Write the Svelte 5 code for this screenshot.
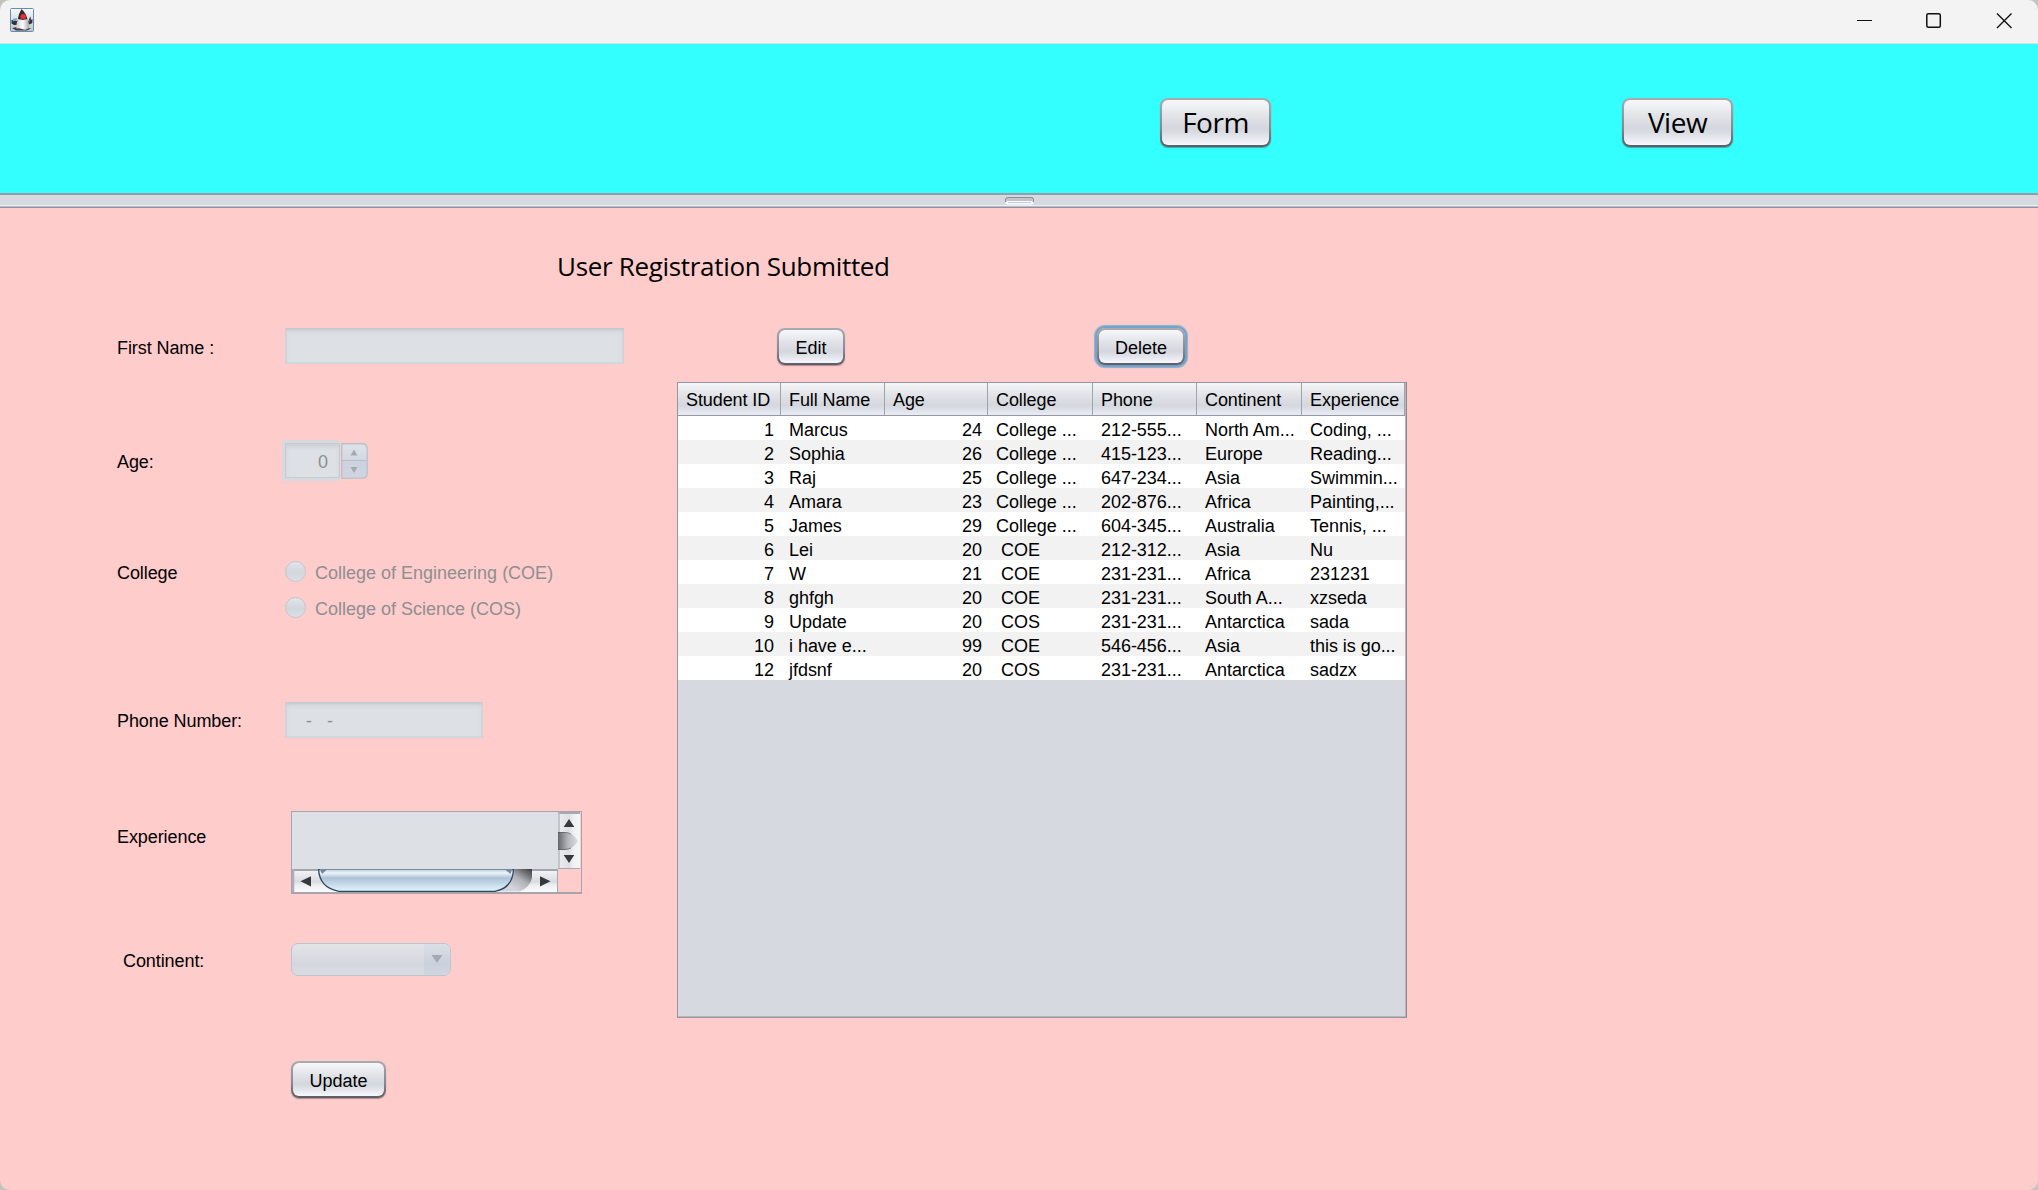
<script>
  const columns = ['Student ID', 'Full Name', 'Age', 'College', 'Phone', 'Continent', 'Experience'];
  const rows = [
    ['1', 'Marcus', '24', 'College ...', '212-555...', 'North Am...', 'Coding, ...'],
    ['2', 'Sophia', '26', 'College ...', '415-123...', 'Europe', 'Reading...'],
    ['3', 'Raj', '25', 'College ...', '647-234...', 'Asia', 'Swimmin...'],
    ['4', 'Amara', '23', 'College ...', '202-876...', 'Africa', 'Painting,...'],
    ['5', 'James', '29', 'College ...', '604-345...', 'Australia', 'Tennis, ...'],
    ['6', 'Lei', '20', ' COE', '212-312...', 'Asia', 'Nu'],
    ['7', 'W', '21', ' COE', '231-231...', 'Africa', '231231'],
    ['8', 'ghfgh', '20', ' COE', '231-231...', 'South A...', 'xzseda'],
    ['9', 'Update', '20', ' COS', '231-231...', 'Antarctica', 'sada'],
    ['10', 'i have e...', '99', ' COE', '546-456...', 'Asia', 'this is go...'],
    ['12', 'jfdsnf', '20', ' COS', '231-231...', 'Antarctica', 'sadzx']
  ];
</script>

<div class="window">
  <div class="titlebar">
    <svg class="duke" width="24" height="24" viewBox="0 0 24 24">
      <defs>
        <linearGradient id="tile" x1="0" y1="0" x2="0" y2="1">
          <stop offset="0" stop-color="#f6f8fd" /><stop offset="1" stop-color="#bfc4d2" />
        </linearGradient>
        <linearGradient id="belly" x1="0" y1="0" x2="1" y2="0">
          <stop offset="0" stop-color="#c8c8c8" /><stop offset=".5" stop-color="#fff" /><stop offset="1" stop-color="#aaa" />
        </linearGradient>
      </defs>
      <rect x=".5" y=".5" width="23" height="23" rx="1" fill="url(#tile)" stroke="#6d8ba6" />
      <path d="M2 20Q10 18 21 20.500L17 22.500H6Z" fill="#3d4146" />
      <path d="M1.500 12L7 13L9 10L9.500 13L8 17L4 17L1.500 15.500Z" fill="#2e3338" />
      <path d="M3 11L7 10L6.500 12.500L3 13.500Z" fill="#6fa5cc" />
      <path d="M16 10L19.500 14L19 11L20.500 8.500L21 12L22.500 11L22.300 15L19.500 16.500L16 14Z" fill="#2e3338" />
      <path d="M8.500 10Q5.500 17 6.500 20.500Q9 20 12 21Q16 22.500 18.500 20.500Q20 15 16.500 10Z" fill="url(#belly)" />
      <path d="M11.500 1Q8.500 6 7.800 11L13 12L17.300 11Q16 5 11.500 1Z" fill="#2d2d30" />
      <ellipse cx="13.200" cy="8.600" rx="2.800" ry="2.600" fill="#f02a2c" />
    </svg>
    <svg class="controls" width="150" height="18" viewBox="0 0 150 18" fill="none" stroke="#101010">
      <path d="M1 8.500H16" />
      <rect x="70.800" y="1.800" width="13.500" height="13.500" rx="1.500" stroke-width="1.500" />
      <path d="M141 1.500L155.500 16M155.500 1.500L141 16" stroke-width="1.400" />
    </svg>
  </div>

  <nav class="toolbar">
    <button class="btn large">Form</button>
    <button class="btn large">View</button>
  </nav>

  <div class="splitter">
    <svg width="29" height="8" viewBox="0 0 29 8">
      <rect x=".5" y=".5" width="28" height="7" rx="2" fill="#fafbff" />
      <path d="M.700 5V2.500Q1 .700 3 .700H26Q28 .700 28.300 2.500V5" fill="none" stroke="#8b8f9b" stroke-width="1.400" />
      <rect x="2" y="2" width="25" height="2" fill="#bfc2cb" />
      <rect x="3" y="5" width="23" height="1" fill="#c6c9d1" />
    </svg>
  </div>

  <main>
    <h1><span>User Registration Submitted</span></h1>
    <div class="content">
      <section class="form">
        <div class="row name">
          <span class="label">First Name :</span>
          <div class="field"></div>
        </div>
        <div class="row age">
          <span class="label">Age:</span>
          <div class="spinner">
            <div class="number">0</div>
            <svg width="27" height="36" viewBox="0 0 27 36">
              <defs>
                <linearGradient id="spin" x1="0" y1="0" x2="0" y2="1">
                  <stop offset="0" stop-color="#dfe3e9" /><stop offset=".45" stop-color="#d3d9e1" />
                  <stop offset=".5" stop-color="#ccd3df" /><stop offset="1" stop-color="#cfd6e1" />
                </linearGradient>
              </defs>
              <path d="M.750 .750H21Q26.200 .750 26.200 6V30Q26.200 35.200 21 35.200H.750Z" fill="url(#spin)" stroke="#b7c1cd" stroke-width="1.300" />
              <path d="M1 17.500H26" stroke="#b9c1cc" />
              <path d="M9.500 12.500L13 6.500L16.500 12.500ZM9.500 24L13 30L16.500 24Z" fill="#a4a9b1" />
            </svg>
          </div>
        </div>
        <div class="row college">
          <span class="label">College</span>
          <div class="radios">
            <div class="option"><i class="radio"></i><span>College of Engineering (COE)</span></div>
            <div class="option"><i class="radio"></i><span>College of Science (COS)</span></div>
          </div>
        </div>
        <div class="row phone">
          <span class="label">Phone Number:</span>
          <div class="field short">{'   -   -   '}</div>
        </div>
        <div class="row experience">
          <span class="label">Experience</span>
          <div class="scrollpane">
            <div class="viewport"></div>
            <svg class="vbar" width="22" height="57" viewBox="0 0 22 57">
              <defs>
                <linearGradient id="vface" x1="0" y1="0" x2="1" y2="0">
                  <stop offset="0" stop-color="#eceef1" /><stop offset=".5" stop-color="#dcdfe4" />
                  <stop offset=".7" stop-color="#eef0f3" /><stop offset="1" stop-color="#f4f6f8" />
                </linearGradient>
                <linearGradient id="vtrack" x1="0" y1="0" x2="1" y2="0">
                  <stop offset="0" stop-color="#66676c" /><stop offset=".5" stop-color="#b7b8be" /><stop offset="1" stop-color="#dcdde3" />
                </linearGradient>
              </defs>
              <rect width="22" height="57" fill="url(#vface)" />
              <path d="M0 1H22" stroke="#a9aab1" stroke-width="2" />
              <path d="M1 0V57" stroke="#b6b8bf" stroke-width="1.500" />
              <path d="M0 56.500H22" stroke="#a6a8b0" />
              <path d="M0 20H7Q14 20 20 29Q14 38 7 38H0Z" fill="url(#vtrack)" />
              <path d="M0 20.500H7Q10 20.500 13 22M0 37.500H7Q10 37.500 13 36" fill="none" stroke="#4d4e53" opacity=".55" />
              <path d="M11 7L16.300 15H5.700ZM5.700 43H16.300L11 51Z" fill="#37383b" />
            </svg>
            <svg class="hbar" width="266" height="23" viewBox="0 0 266 23">
              <defs>
                <linearGradient id="hface" x1="0" y1="0" x2="0" y2="1">
                  <stop offset="0" stop-color="#f6f7f9" /><stop offset=".55" stop-color="#d9dbe0" />
                  <stop offset=".7" stop-color="#eceef1" /><stop offset="1" stop-color="#fafbfc" />
                </linearGradient>
                <linearGradient id="thumb" x1="0" y1="0" x2="0" y2="1">
                  <stop offset="0" stop-color="#b7c7d8" /><stop offset=".18" stop-color="#eef4fa" />
                  <stop offset=".4" stop-color="#adc2d7" /><stop offset="1" stop-color="#e2f5fd" />
                </linearGradient>
                <linearGradient id="htrack" x1="0" y1="1" x2="1" y2="0">
                  <stop offset=".3" stop-color="#d3d4dd" /><stop offset=".6" stop-color="#b2b3b9" /><stop offset="1" stop-color="#38393c" />
                </linearGradient>
              </defs>
              <rect width="266" height="23" fill="url(#hface)" />
              <path d="M0 1H266" stroke="#a3a5ac" stroke-width="2" />
              <path d="M1 0V23" stroke="#acaeb4" stroke-width="2.500" />
              <path d="M265.500 0V23" stroke="#a6a8b0" />
              <path d="M205 22.500Q222 18 222 0H240V9Q238 18 228 22.500Z" fill="url(#htrack)" />
              <path d="M26.500 0Q27.500 19 47 22.300H203Q221 19 221.500 0Z" fill="url(#thumb)" stroke="#2f475d" stroke-width="1.300" />
              <path d="M28 0H220" stroke="#9db1c6" />
              <path d="M28 .500H35L30 5ZM220 .500H213L218.500 5Z" fill="#7088a0" />
              <path d="M8.500 12.300L19 7.300V17.500ZM248 7.300V17.500L258.500 12.300Z" fill="#37383b" />
            </svg>
          </div>
        </div>
        <div class="row continent">
          <span class="label">Continent:</span>
          <div class="combo">
            <div class="arrow">
              <svg width="12" height="8" viewBox="0 0 12 8"><path d="M.500 0H11.500L6 8Z" fill="#a5aab2" /></svg>
            </div>
          </div>
        </div>
        <div class="row actions"><button class="btn update">Update</button></div>
      </section>

      <section class="records">
        <div class="buttons">
          <button class="btn edit">Edit</button>
          <button class="btn delete">Delete</button>
        </div>
        <div class="table">
          <div class="line head">
            {#each columns as column}<div class="cell">{column}</div>{/each}
          </div>
          {#each rows as row, r}
            <div class="line" class:odd={r % 2 === 1}>
              {#each row as value, c}<div class="cell" class:num={c === 0} class:years={c === 2}>{value}</div>{/each}
            </div>
          {/each}
        </div>
      </section>
    </div>
  </main>
</div>

<style>
  :global(body) {
    margin: 0;
    background: #c4c4bf;
  }
  .window {
    width: 2038px;
    height: 1190px;
    display: flex;
    flex-direction: column;
    overflow: hidden;
    border-radius: 10px;
    font: 18px/20px 'Liberation Sans', Arial, sans-serif;
    color: #000;
  }
  .titlebar {
    box-sizing: border-box;
    height: 44px;
    padding: 8px 26px 0 10px;
    display: flex;
    justify-content: space-between;
    background: #f3f3f3;
    border-bottom: 1px solid #d5dddd;
  }
  .controls {
    margin: 4px 6px 0 0;
    overflow: visible;
  }
  .toolbar {
    box-sizing: border-box;
    height: 149px;
    padding: 54px 0 0 1160px;
    display: flex;
    align-items: flex-start;
    gap: 351px;
    background: #33ffff;
  }
  .btn {
    box-sizing: border-box;
    margin: 0;
    padding: 2px 0 0;
    flex: none;
    border: 2px solid transparent;
    border-radius: 8px;
    background:
      linear-gradient(#f7f8fa, #e2e4e8 35%, #d4d7de 63%, #d9dce3 72%, #f6f8fd) padding-box,
      linear-gradient(#a9abb0, #87898f 60%, #5b5d64) border-box;
    box-shadow: 0 1px 1px rgba(60, 40, 50, 0.4);
    font: inherit;
    color: #000;
  }
  .large {
    width: 111px;
    height: 49px;
    padding: 0 0 1px;
    font: 28px/38px 'Open Sans', 'Noto Sans', sans-serif;
    letter-spacing: -0.5px;
  }
  .splitter {
    box-sizing: border-box;
    height: 15px;
    padding-top: 2px;
    display: flex;
    justify-content: center;
    background: #d6d9e0;
    border-top: 2px solid #999ba6;
    border-bottom: 1px solid #8f929d;
    box-shadow: inset 0 -1px #b9bcc6, inset 0 -2px #eceef3;
  }
  main {
    flex: 1;
    background: #ffcccc;
  }
  h1 {
    margin: 0;
    height: 80px;
    padding: 40px 0 0 557px;
    font: 26px/36px 'Open Sans', 'Noto Sans', sans-serif;
    letter-spacing: -0.32px;
  }
  .content {
    display: flex;
  }
  .form {
    width: 560px;
    padding-left: 117px;
  }
  .row {
    display: flex;
    align-items: flex-start;
  }
  .label {
    width: 168px;
    flex: none;
    white-space: nowrap;
    letter-spacing: -0.08px;
  }
  .field {
    box-sizing: border-box;
    width: 339px;
    height: 36px;
    background: #dde0e4;
    box-shadow: inset 0 2px 2px #c6cad0, inset 0 3px 5px #cfd3d8, inset 0 0 0 2px #d2d9de;
    color: #8e8f8f;
  }
  .short {
    width: 198px;
    padding: 9px 6px 0;
    white-space: pre;
  }
  .name .label { padding-top: 10px; }
  .age { margin-top: 76px; }
  .age .label { padding-top: 12px; width: 165px; }
  .spinner {
    display: flex;
    align-items: center;
    gap: 1px;
  }
  .number {
    box-sizing: border-box;
    width: 58px;
    height: 41px;
    padding: 9px 12px 0 0;
    border: 3px solid #d5dadf;
    border-right: 0;
    background: #dde0e4;
    box-shadow: inset 0 0 0 1px #c8cbd0, inset 0 3px 4px #c8cbd0;
    color: #8e8f8f;
    text-align: right;
  }
  .college { margin-top: 80px; }
  .college .label { padding-top: 2px; }
  .radios {
    display: grid;
    gap: 15px;
  }
  .option {
    height: 21px;
    display: flex;
    gap: 9px;
    color: #8e8f91;
    white-space: nowrap;
  }
  .option span { padding-top: 2px; }
  .radio {
    box-sizing: border-box;
    width: 21px;
    height: 21px;
    border: 1.5px solid #bfc7cf;
    border-radius: 50%;
    background: linear-gradient(#e2e5e8, #d2d6dd 55%, #dbe1e8);
  }
  .phone { margin-top: 84px; }
  .phone .label { padding-top: 9px; }
  .experience { margin-top: 73px; }
  .experience .label { padding-top: 16px; width: 174px; }
  .scrollpane {
    box-sizing: border-box;
    width: 291px;
    height: 83px;
    border: 1px solid #aaa3ad;
    border-bottom-width: 2px;
    display: grid;
    grid-template: 57px 23px / 266px 22px;
  }
  .scrollpane svg { display: block; }
  .viewport { background: #dde0e4; }
  .continent { margin-top: 49px; }
  .continent .label { box-sizing: border-box; padding: 8px 0 0 6px; width: 174px; }
  .combo {
    box-sizing: border-box;
    width: 160px;
    height: 33px;
    border: 1.5px solid #bcc5ce;
    border-radius: 7px;
    display: flex;
    justify-content: flex-end;
    overflow: hidden;
    background: linear-gradient(#e3e4e8, #d4d7dd 65%, #d9dce2);
  }
  .arrow {
    width: 26px;
    padding-top: 11px;
    display: flex;
    justify-content: center;
    align-items: flex-start;
    background: linear-gradient(#dbdfe7, #cad0dc 65%, #cfd6e1);
  }
  .actions { margin-top: 85px; padding-left: 174px; }
  .update { width: 95px; height: 37px; }
  .records { width: 730px; }
  .buttons {
    height: 54px;
    padding-left: 100px;
    display: flex;
    align-items: flex-start;
    gap: 252px;
  }
  .edit { width: 68px; height: 37px; }
  .delete {
    width: 88px;
    height: 37px;
    box-shadow: 0 0 0 2px #74a3cc, 0 0 1px 3px #8fb0cf;
  }
  .table {
    box-sizing: border-box;
    width: 730px;
    height: 636px;
    border: 1px solid #9297a1;
    border-right-color: #8d8794;
    background: #d6d9e0;
    box-shadow: inset -1px -1px #bdb3bb;
  }
  .line {
    width: 727px;
    height: 24px;
    display: grid;
    grid-template-columns: 103px 104px 103px 105px 104px 105px 103px;
    background: #fff;
  }
  .odd { background: #f2f2f2; }
  .cell {
    padding: 4px 0 0 8px;
    white-space: pre;
    letter-spacing: -0.04px;
  }
  .num {
    padding: 4px 7px 0 0;
    text-align: right;
  }
  .years {
    padding: 4px 6px 0 0;
    text-align: right;
  }
  .head {
    box-sizing: border-box;
    height: 33px;
    border-bottom: 1px solid #9297a1;
    background: linear-gradient(#f5f6f9, #e0e2e7 40%, #d4d7de 70%, #e9ecf3);
  }
  .head .cell {
    padding-top: 7px;
    border-right: 1px solid #a0a3ac;
    letter-spacing: -0.1px;
  }
</style>
